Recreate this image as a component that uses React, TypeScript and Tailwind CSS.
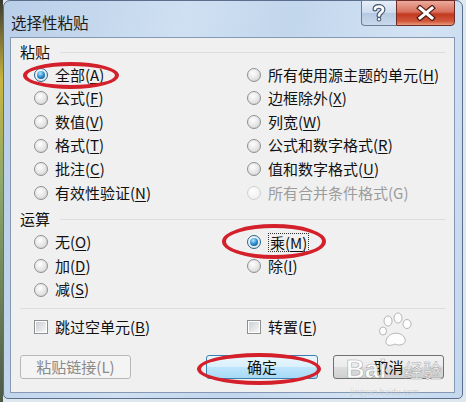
import React from "react";

// 选项: [文字, 快捷键]
const PASTE_LEFT: [string, string][] = [
  ["全部", "A"],
  ["公式", "F"],
  ["数值", "V"],
  ["格式", "T"],
  ["批注", "C"],
  ["有效性验证", "N"],
];

const PASTE_RIGHT: [string, string][] = [
  ["所有使用源主题的单元", "H"],
  ["边框除外", "X"],
  ["列宽", "W"],
  ["公式和数字格式", "R"],
  ["值和数字格式", "U"],
];

const OP_LEFT: [string, string][] = [
  ["无", "O"],
  ["加", "D"],
  ["减", "S"],
];

const OP_RIGHT: [string, string][] = [
  ["乘", "M"],
  ["除", "I"],
];

function Radio({ checked, disabled }: { checked?: boolean; disabled?: boolean }) {
  return (
    <span
      className={`flex h-[14px] w-[14px] shrink-0 items-center justify-center rounded-full border ${
        disabled
          ? "border-[#cfd1d3] bg-[radial-gradient(circle_at_40%_35%,#ffffff,#f0f0f0_70%,#e4e4e4)]"
          : checked
          ? "border-[#2c628b] bg-[radial-gradient(circle_at_40%_35%,#ffffff,#dfe9f1_70%,#b8c7d4)]"
          : "border-[#8e8f8f] bg-[radial-gradient(circle_at_40%_35%,#ffffff,#e2e2e2_60%,#c2c2c2)]"
      }`}
    >
      {checked && (
        <span className="h-[8px] w-[8px] rounded-full bg-[radial-gradient(circle_at_40%_30%,#b6e6ff,#2a8fd0_50%,#0a3f66)]" />
      )}
    </span>
  );
}

function Checkbox() {
  return (
    <span className="flex h-[14px] w-[14px] shrink-0 items-center justify-center border border-[#8e8f8f] bg-white">
      <span className="h-[10px] w-[10px] bg-[linear-gradient(135deg,#cbcfd5,#f6f6f6)]" />
    </span>
  );
}

function Label({ text, hot, disabled }: { text: string; hot: string; disabled?: boolean }) {
  return (
    <span className={disabled ? "text-[#9c9c9c]" : "text-[#111]"}>
      {text}(
      {disabled ? hot : <u className="underline-offset-[2px]">{hot}</u>})
    </span>
  );
}

function Option({
  text,
  hot,
  checked,
  disabled,
  focused,
}: {
  text: string;
  hot: string;
  checked?: boolean;
  disabled?: boolean;
  focused?: boolean;
}) {
  return (
    <div className="flex h-[23.6px] items-center gap-[7px]">
      <Radio checked={checked} disabled={disabled} />
      <span className={focused ? "border border-dotted border-[#333] px-[1px] leading-[17px]" : ""}>
        <Label text={text} hot={hot} disabled={disabled} />
      </span>
    </div>
  );
}

function Header({ title }: { title: string }) {
  return (
    <div className="flex h-[22px] items-center pl-[9px] pr-[9px]">
      <span className="text-[#111]">{title}</span>
      <span className="ml-[10px] h-px flex-1 bg-[#d9dde1]" />
    </div>
  );
}

export default function App() {
  return (
    <div
      className="relative flex h-[402px] w-[466px] overflow-hidden bg-[#dfe7ef] text-[15px]"
      style={{ fontFamily: '"Noto Sans CJK SC", "Noto Sans", sans-serif' }}
    >
      {/* 背景里的 Excel */}
      <div className="h-full w-[3px] bg-[linear-gradient(#3a3a30,#c9b540_20%,#8fa96a_45%,#4d5a48)]" />

      {/* 窗口 */}
      <div className="flex h-[399px] w-[460px] flex-col rounded-t-[7px] rounded-b-[5px] border border-[#5b6f8c] bg-[linear-gradient(100deg,#b9cfe8_0%,#cfe0f2_35%,#c2d6ec_55%,#d3e3f4_80%,#c3d7ee_100%)] pb-[5px] pl-[6px] pr-[7px]">
        {/* 标题栏 */}
        <div className="flex h-[36px] shrink-0">
          <span className="pl-[1px] pt-[11px] text-[15.5px] leading-[20px] text-[#1b1b1b]">选择性粘贴</span>
          <div className="-mt-[1px] ml-auto flex h-[26px]">
            <div className="flex w-[35px] items-center justify-center rounded-bl-[4px] border border-r-0 border-[#6a7e98] bg-[linear-gradient(#e6eef8_0%,#cddcee_50%,#b5c9e2_51%,#c8d9ec_100%)]">
              <svg width="14" height="18" viewBox="0 0 14 18">
                <g fill="none" strokeLinecap="round">
                  <path d="M3 5 C3 1.5 11 1.5 11 5.5 C11 8.5 7 8.5 7 11.5" stroke="#4a5a70" strokeWidth="5" />
                  <path d="M3 5 C3 1.5 11 1.5 11 5.5 C11 8.5 7 8.5 7 11.5" stroke="#ffffff" strokeWidth="2.6" />
                </g>
                <circle cx="7" cy="15.2" r="2.3" fill="#4a5a70" />
                <circle cx="7" cy="15.2" r="1.2" fill="#ffffff" />
              </svg>
            </div>
            <div className="flex w-[59px] items-center justify-center rounded-br-[4px] border border-[#6e2a22] bg-[linear-gradient(#ecaa9c_0%,#d8705c_45%,#c2391f_55%,#d25a3d_85%,#e99a7c_100%)]">
              <svg width="20" height="16" viewBox="0 0 20 16">
                <g strokeLinecap="square">
                  <path d="M4 3 L16 13 M16 3 L4 13" stroke="#4e1a14" strokeWidth="5.4" />
                  <path d="M4 3 L16 13 M16 3 L4 13" stroke="#ffffff" strokeWidth="3" />
                </g>
              </svg>
            </div>
          </div>
        </div>

        {/* 客户区 */}
        <div className="flex flex-1 flex-col border border-[#8599b5] bg-[#f0f0f0] pt-[3px]">
          <Header title="粘贴" />
          <div className="grid grid-cols-[213px_1fr] pl-[23px]">
            <div>
              {PASTE_LEFT.map(([t, k], i) => (
                <Option key={t} text={t} hot={k} checked={i === 0} />
              ))}
            </div>
            <div>
              {PASTE_RIGHT.map(([t, k]) => (
                <Option key={t} text={t} hot={k} />
              ))}
              <Option text="所有合并条件格式" hot="G" disabled />
            </div>
          </div>

          <div className="mt-[4px]">
            <Header title="运算" />
          </div>
          <div className="grid grid-cols-[213px_1fr] pl-[23px]">
            <div>
              {OP_LEFT.map(([t, k]) => (
                <Option key={t} text={t} hot={k} />
              ))}
            </div>
            <div>
              {OP_RIGHT.map(([t, k], i) => (
                <Option key={t} text={t} hot={k} checked={i === 0} focused={i === 0} />
              ))}
            </div>
          </div>

          <div className="mx-[9px] mt-[7px] h-px bg-[#d9dde1]" />

          <div className="mt-[6px] grid h-[24px] grid-cols-[213px_1fr] pl-[23px]">
            <div className="flex items-center gap-[7px]">
              <Checkbox />
              <Label text="跳过空单元" hot="B" />
            </div>
            <div className="flex items-center gap-[7px]">
              <Checkbox />
              <Label text="转置" hot="E" />
            </div>
          </div>

          <div className="mt-[16px] flex h-[24px] pl-[9px] pr-[10px]">
            <div className="flex w-[111px] items-center justify-center rounded-[3px] border border-[#b5b9bc] bg-[#f4f4f4] text-[#8a8a8a]">
              粘贴链接(L)
            </div>
            <div className="ml-auto flex w-[112px] items-center justify-center rounded-[3px] border border-[#3c7fb1] bg-[linear-gradient(#eaf6fd_0%,#d9f0fc_50%,#bee6fd_51%,#a7d9f5_100%)] text-[#111]">
              确定
            </div>
            <div className="ml-[15px] flex w-[111px] items-center justify-center rounded-[3px] border border-[#707070] bg-[linear-gradient(#f2f2f2_0%,#ebebeb_50%,#dddddd_51%,#cfcfcf_100%)] text-[#111]">
              取消
            </div>
          </div>
        </div>
      </div>

      {/* 红色圈注 */}
      <div className="absolute left-[23px] top-[62px] h-[27px] w-[96px] rounded-[50%] border-[4px] border-[#d3202b]" />
      <div className="absolute left-[222px] top-[224px] h-[35px] w-[104px] rounded-[50%] border-[4px] border-[#d3202b]" />
      <div className="absolute left-[197px] top-[353px] h-[32px] w-[124px] rounded-[50%] border-[4px] border-[#d3202b]" />

      {/* 百度经验水印 */}
      <div className="pointer-events-none absolute left-[344px] top-[310px] h-[90px] w-[110px] text-white/90">
        <svg className="absolute left-[34px] top-[2px]" width="36" height="36" viewBox="0 0 36 36">
          <g fill="rgba(255,255,255,0.85)" stroke="rgba(120,120,120,0.5)" strokeWidth="1">
            <ellipse cx="10" cy="9" rx="4" ry="5" />
            <ellipse cx="20" cy="6" rx="4" ry="5" />
            <ellipse cx="29" cy="12" rx="4" ry="4.5" />
            <ellipse cx="5" cy="19" rx="3.5" ry="4" />
            <path d="M8 30 C8 20 24 18 27 27 C29 33 20 34 17 32 C13 34 8 34 8 30 Z" />
          </g>
        </svg>
        <span
          className="absolute left-[2px] top-[44px] text-[26px] font-bold leading-[30px]"
          style={{ fontFamily: '"Liberation Sans", sans-serif', WebkitTextStroke: "0.6px rgba(130,130,130,0.7)" }}
        >
          Bai
        </span>
        <span
          className="absolute left-[60px] top-[49px] text-[19px] leading-[22px]"
          style={{ WebkitTextStroke: "0.5px rgba(130,130,130,0.7)" }}
        >
          经验
        </span>
        <span className="absolute left-[6px] top-[77px] text-[8px] leading-[9px] text-[#c8c8c8]/70">jingyan.baidu.com</span>
      </div>
    </div>
  );
}
